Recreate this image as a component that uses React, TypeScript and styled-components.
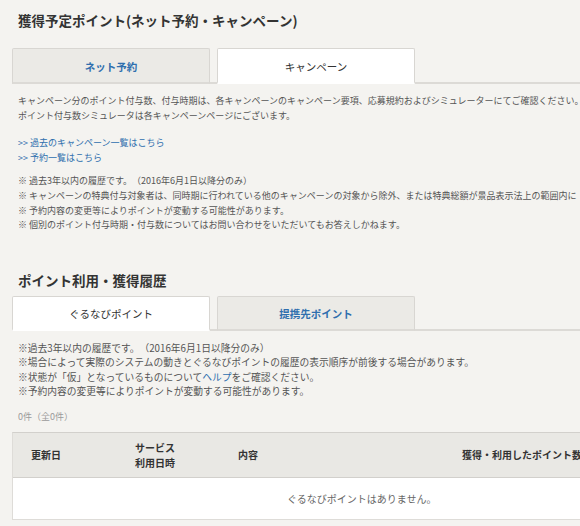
import React from "react";
import styled, { createGlobalStyle } from "styled-components";

const Global = createGlobalStyle`
  html, body {
    margin: 0;
    padding: 0;
    background: #f4f3f0;
    overflow: hidden;
  }
  body {
    font-family: "Noto Sans CJK JP", "Noto Sans", "DejaVu Sans", sans-serif;
    color: #444;
    text-spacing-trim: space-all;
  }
`;

const Page = styled.div`
  width: 768px;
  padding: 10px 0 0 12px;
`;

const Section = styled.section<{ $gap?: number }>`
  margin-top: ${(p) => p.$gap ?? 0}px;
`;

const Title = styled.h2`
  margin: 0;
  padding-left: 6px;
  font-size: 13.5px;
  line-height: 20px;
  font-weight: bold;
  color: #333;
`;

const TabBar = styled.div<{ $top: number }>`
  display: flex;
  gap: 7px;
  margin-top: ${(p) => p.$top}px;
  border-bottom: 2px solid #dcdad6;
`;

const Tab = styled.div<{ $active?: boolean; $h: number }>`
  width: 198px;
  height: ${(p) => p.$h}px;
  box-sizing: border-box;
  display: flex;
  align-items: center;
  justify-content: center;
  margin-bottom: -2px;
  border: 1px solid #d8d6d2;
  border-bottom: ${(p) => (p.$active ? "2px solid #ffffff" : "2px solid #dcdad6")};
  border-radius: 2px 2px 0 0;
  background: ${(p) => (p.$active ? "#ffffff" : "#ebeae6")};
  color: ${(p) => (p.$active ? "#333" : "#2f6fae")};
  font-weight: ${(p) => (p.$active ? "normal" : "bold")};
  font-size: 10.5px;
  padding-top: 2px;
`;

const Block = styled.div<{ $top: number; $size?: number; $lh?: number }>`
  margin-top: ${(p) => p.$top}px;
  padding-left: 6px;
  font-size: ${(p) => p.$size ?? 9}px;
  line-height: ${(p) => p.$lh ?? 14.6}px;
  color: #555;
  white-space: nowrap;
`;

const Line = styled.div``;

const Link = styled.a`
  color: #2f6fae;
  text-decoration: none;
`;

const Count = styled.div`
  margin-top: 11px;
  padding-left: 6px;
  font-size: 9px;
  line-height: 14px;
  color: #9a9a9a;
`;

const Table = styled.div`
  margin-top: 8px;
  border: 1px solid #dedcd8;
  border-top: 1px solid #d2d0cc;
`;

const HeaderRow = styled.div`
  display: grid;
  grid-template-columns: 66px 152px 34px 1fr;
  height: 44px;
  background: #e9e8e4;
  border-bottom: 1px solid #d2d0cc;
`;

const HeadCell = styled.div`
  display: flex;
  align-items: center;
  justify-content: center;
  text-align: center;
  font-size: 10px;
  line-height: 15px;
  font-weight: bold;
  color: #333;
  white-space: nowrap;
`;

const EmptyRow = styled.div`
  height: 41px;
  background: #fff;
  display: flex;
  align-items: center;
  padding-left: 274px;
  font-size: 10px;
  color: #666;
`;

export default function App() {
  return (
    <>
      <Global />
      <Page>
        <Section>
          <Title>獲得予定ポイント(ネット予約・キャンペーン)</Title>
          <TabBar $top={18}>
            <Tab $h={36}>ネット予約</Tab>
            <Tab $h={36} $active>
              キャンペーン
            </Tab>
          </TabBar>
          <Block $top={10}>
            <Line>
              キャンペーン分のポイント付与数、付与時期は、各キャンペーンのキャンペーン要項、応募規約およびシミュレーターにてご確認ください。
            </Line>
            <Line>ポイント付与数シミュレータは各キャンペーンページにございます。</Line>
          </Block>
          <Block $top={13}>
            <Line>
              <Link href="#">&gt;&gt; 過去のキャンペーン一覧はこちら</Link>
            </Line>
            <Line>
              <Link href="#">&gt;&gt; 予約一覧はこちら</Link>
            </Line>
          </Block>
          <Block $top={9}>
            <Line>※ 過去3年以内の履歴です。（2016年6月1日以降分のみ）</Line>
            <Line>
              ※
              キャンペーンの特典付与対象者は、同時期に行われている他のキャンペーンの対象から除外、または特典総額が景品表示法上の範囲内に
            </Line>
            <Line>※ 予約内容の変更等によりポイントが変動する可能性があります。</Line>
            <Line>※ 個別のポイント付与時期・付与数についてはお問い合わせをいただいてもお答えしかねます。</Line>
          </Block>
        </Section>
        <Section $gap={37}>
          <Title>ポイント利用・獲得履歴</Title>
          <TabBar $top={6}>
            <Tab $h={35} $active>
              ぐるなびポイント
            </Tab>
            <Tab $h={35}>提携先ポイント</Tab>
          </TabBar>
          <Block $top={10} $size={9.75} $lh={14.5}>
            <Line>※過去3年以内の履歴です。（2016年6月1日以降分のみ）</Line>
            <Line>※場合によって実際のシステムの動きとぐるなびポイントの履歴の表示順序が前後する場合があります。</Line>
            <Line>
              ※状態が「仮」となっているものについて<Link href="#">ヘルプ</Link>をご確認ください。
            </Line>
            <Line>※予約内容の変更等によりポイントが変動する可能性があります。</Line>
          </Block>
          <Count>0件（全0件）</Count>
          <Table>
            <HeaderRow>
              <HeadCell>更新日</HeadCell>
              <HeadCell>
                サービス
                <br />
                利用日時
              </HeadCell>
              <HeadCell>内容</HeadCell>
              <HeadCell>獲得・利用したポイント数</HeadCell>
            </HeaderRow>
            <EmptyRow>ぐるなびポイントはありません。</EmptyRow>
          </Table>
        </Section>
      </Page>
    </>
  );
}
